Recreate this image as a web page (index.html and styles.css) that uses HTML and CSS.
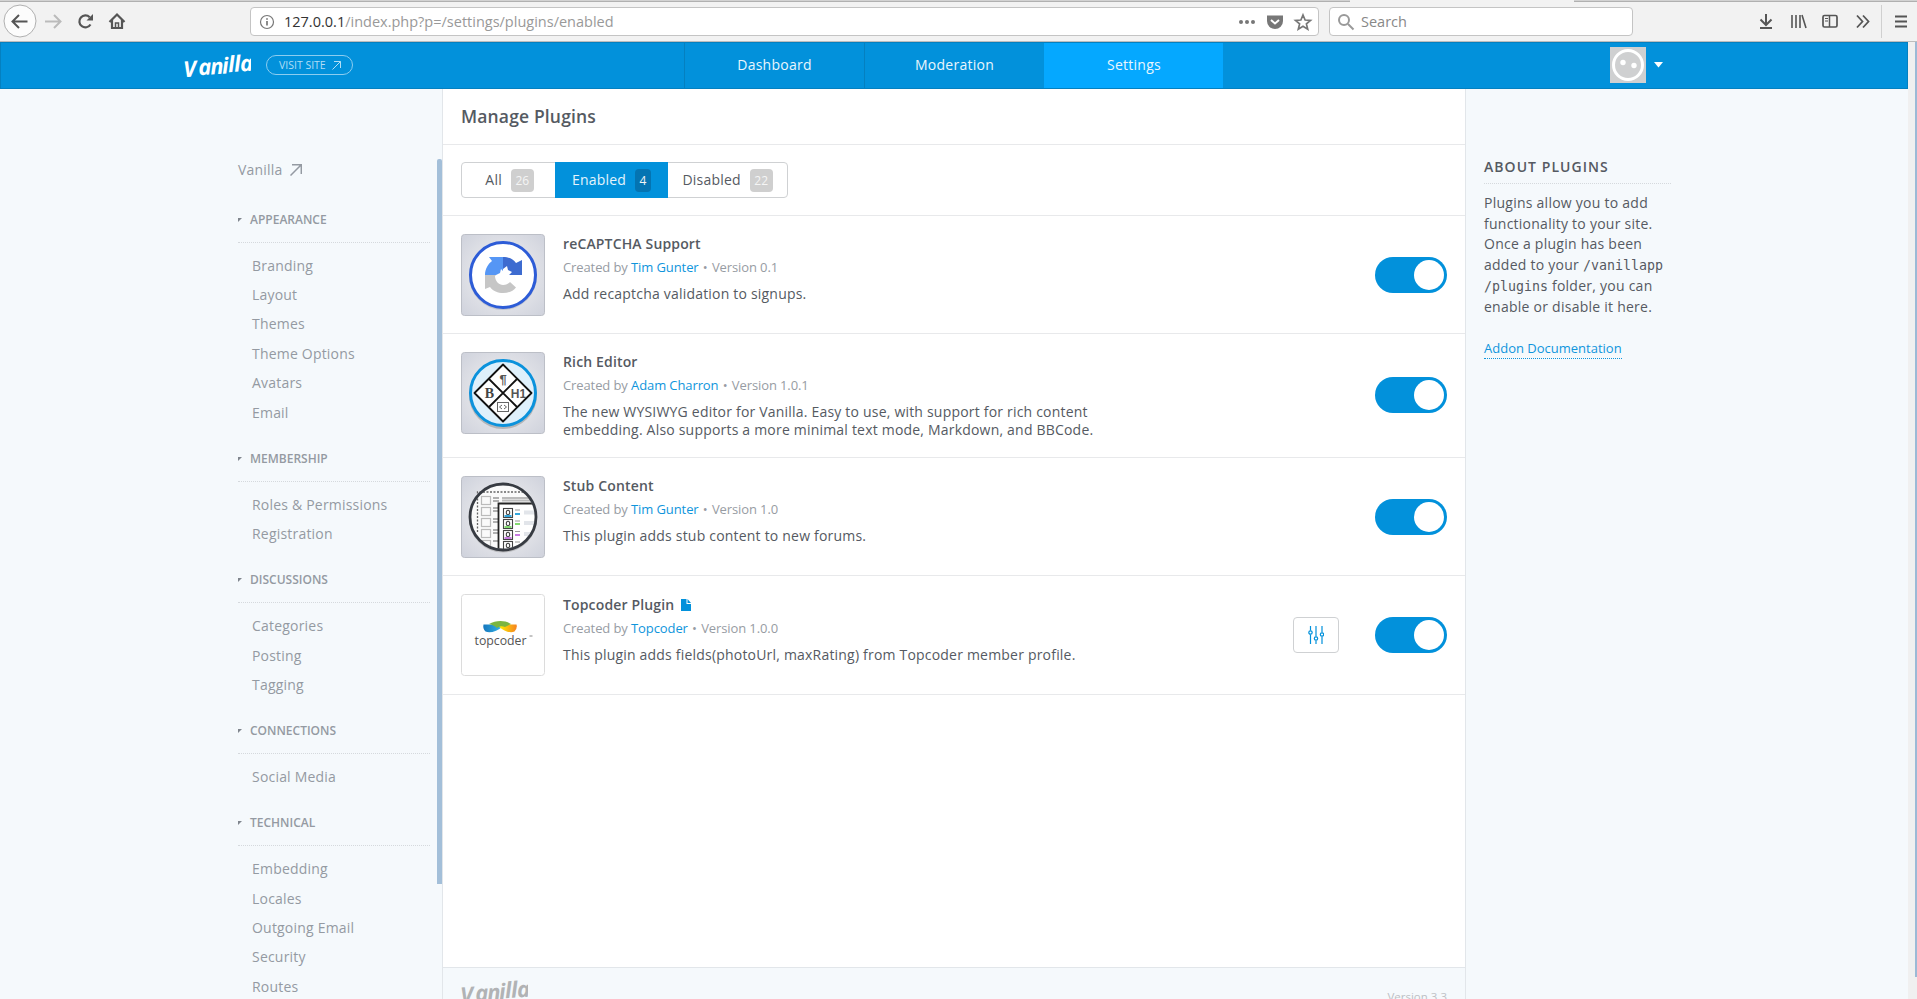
FILE: index.html
```html
<!DOCTYPE html>
<html lang="en">
<head>
<meta charset="utf-8">
<title>Manage Plugins</title>
<link rel="stylesheet" href="styles.css">
</head>
<body>
<div class="tabstrip"><span class="tab-left"></span><span class="tab-active"></span><span class="tab-right"></span></div>
<div class="toolbar">
  <svg class="nav-icons" width="140" height="39" viewBox="0 2 140 39" fill="none">
    <circle cx="20" cy="21" r="16" fill="#fcfcfc" stroke="#b0b0b0"/>
    <path d="M27.500 21.500H13M19 15l-6.500 6.500L19 28" stroke="#555" stroke-width="2"/>
    <path d="M45 21.500h15M54 15l6.500 6.500L54 28" stroke="#bbb" stroke-width="2"/>
    <path d="M90.500 24.500a6 6 0 1 1-.8-7.300" stroke="#555" stroke-width="2.200"/>
    <path d="M93 14v6.500h-6.500z" fill="#555"/>
    <path d="M109.500 22l7.500-7.500 7.500 7.500M112 20v8h10v-8" stroke="#555" stroke-width="2.200"/>
    <path d="M115.500 28v-5h3v5" stroke="#555" stroke-width="1.500"/>
  </svg>
  <div class="urlbar">
    <svg width="16" height="16" viewBox="0 0 16 16" fill="none" stroke="#777"><circle cx="8" cy="8" r="6.500" stroke-width="1.200"/><path d="M8 7v4.500M8 4.300v1.500" stroke-width="1.700"/></svg>
    <span class="url"><b>127.0.0.1</b>/index.php?p=/settings/plugins/enabled</span>
    <svg width="76" height="20" viewBox="0 0 76 20" fill="none">
      <g fill="#777"><circle cx="3" cy="10" r="2"/><circle cx="9" cy="10" r="2"/><circle cx="15" cy="10" r="2"/></g>
      <path d="M29 3.500h16v5.500a8 8 0 0 1-16 0z" fill="#777"/><path d="M33 8l4 3.500L41 8" stroke="#fff" stroke-width="2"/>
      <path d="M65 3l2.100 5 5.400.4-4.100 3.500 1.300 5.300-4.700-2.900-4.700 2.900 1.300-5.300-4.100-3.500 5.400-.4z" stroke="#777" stroke-width="1.700"/>
    </svg>
  </div>
  <div class="searchbar">
    <svg width="18" height="18" viewBox="0 0 18 18" fill="none" stroke="#999" stroke-width="2"><circle cx="7" cy="7" r="5"/><path d="M11 11l5.500 5.500"/></svg>
    <span>Search</span>
  </div>
  <svg class="tool-icons" width="160" height="39" viewBox="1757 2 160 39" fill="none" stroke="#555" stroke-width="2">
    <path d="M1766 14v11M1760.500 19.500l5.500 5.500 5.500-5.500M1760 28h12"/>
    <path d="M1792 15v13M1796 15v13M1800 15v13M1802 15l4 13" stroke-width="1.600"/>
    <rect x="1823" y="15.500" width="14" height="11.500" rx="1.500" stroke-width="1.700"/><path d="M1829.500 16v11" stroke-width="1.500"/><path d="M1825 18.500h3M1825 21h3" stroke-width="1"/>
    <path d="M1857 15.500l5.500 6-5.500 6M1863 15.500l5.500 6-5.500 6" stroke-width="1.800"/>
    <path d="M1881.500 5v33" stroke="#d0d0d0" stroke-width="1"/>
    <path d="M1895 16.500h12M1895 21.500h12M1895 26.500h12"/>
  </svg>
</div>
<div class="viewport">
<div class="page">
  <header class="header">
    <div class="brand">
      <svg class="logo" width="68" height="32" viewBox="0 0 68 32"><g transform="rotate(-4 34 16)"><text x="0 15 27 39 45 51 57" y="26 25 25 25 24 24 24" class="logo-text">Vanilla</text></g></svg>
      <a class="visit">VISIT SITE <svg width="9" height="9" viewBox="0 0 9 9" fill="none" stroke="currentColor"><path d="M.5 8.500l8-8M2 .5h6.500V7"/></svg></a>
    </div>
    <nav class="nav"><a>Dashboard</a><a>Moderation</a><a class="on">Settings</a></nav>
    <div class="me">
      <svg width="36" height="36" viewBox="0 0 36 36"><rect width="36" height="36" fill="#cfd0d1"/><circle cx="18" cy="18" r="14.500" fill="none" stroke="#fff" stroke-width="3"/><circle cx="13" cy="15.500" r="2.700" fill="#fff"/><circle cx="24" cy="18.500" r="2.700" fill="#fff"/></svg>
      <svg width="9" height="6" viewBox="0 0 9 6"><path d="M0 0h9L4.500 5.500z" fill="#fff"/></svg>
    </div>
  </header>
  <div class="body">
    <aside class="side">
      <div class="side-inner">
        <a class="side-home">Vanilla <svg width="12" height="12" viewBox="0 0 12 12" fill="none" stroke="currentColor" stroke-width="1.500"><path d="M.5 11.500l11-11M2 .7h9.300V10"/></svg></a>
        <section><h4>APPEARANCE</h4><a>Branding</a><a>Layout</a><a>Themes</a><a>Theme Options</a><a>Avatars</a><a>Email</a></section>
        <section><h4>MEMBERSHIP</h4><a>Roles &amp; Permissions</a><a>Registration</a></section>
        <section><h4>DISCUSSIONS</h4><a>Categories</a><a>Posting</a><a>Tagging</a></section>
        <section><h4>CONNECTIONS</h4><a>Social Media</a></section>
        <section><h4>TECHNICAL</h4><a>Embedding</a><a>Locales</a><a>Outgoing Email</a><a>Security</a><a>Routes</a></section>
      </div>
      <div class="side-thumb"></div>
    </aside>
    <main class="main">
      <h1>Manage Plugins</h1>
      <div class="filters">
        <div class="group"><a class="all">All <i>26</i></a><a class="on">Enabled <i>4</i></a><a class="dis">Disabled <i>22</i></a></div>
      </div>
      <article class="row r1">
        <svg class="pic" viewBox="0 0 84 82">
          <defs><radialGradient id="bg" r=".7"><stop offset="0" stop-color="#f4f4f5"/><stop offset=".5" stop-color="#e2e3e8"/><stop offset="1" stop-color="#cfd2dc"/></radialGradient></defs>
          <rect x=".5" y=".5" width="83" height="81" rx="3" fill="url(#bg)" stroke="#bcbfc7"/>
          <circle cx="42" cy="42" r="34" fill="#a9abb5" opacity=".5"/>
          <circle cx="42" cy="41" r="32.500" fill="#fff" stroke="#2d5cd7" stroke-width="3"/>
          <path d="M28 23h14v14l-2-2-1 4-4 2H24c0-6 3-11 7-14z" fill="#5596f5"/>
          <path d="M42 23c6 0 10 2 13 6l6-3v15H48l3-3-4-2-1-4-4 3z" fill="#3d6bd0"/>
          <path d="M24 41h11l-1 1c0 5 4 9 8 9 3 0 5-1 7-3l6 5.500c-3 4-8 5.500-13 5.500s-10-2-13-6l-5 2z" fill="#c6c6c6"/>
        </svg>
        <div class="info"><h3>reCAPTCHA Support</h3><p class="meta">Created by <a>Tim Gunter</a> <em>•</em> Version 0.1</p><p class="desc">Add recaptcha validation to signups.</p></div>
        <div class="actions"><span class="toggle"></span></div>
      </article>
      <article class="row r2">
        <svg class="pic" viewBox="0 0 84 82">
          <rect x=".5" y=".5" width="83" height="81" rx="3" fill="url(#bg)" stroke="#bcbfc7"/>
          <circle cx="42" cy="43" r="34" fill="#999" opacity=".6"/>
          <circle cx="42" cy="41" r="32.500" fill="#dff0fb" stroke="#0b92dc" stroke-width="3"/>
          <path d="M42 12.500L70.500 41 42 69.500 13.500 41zM28 27l28 28M56 27L28 55" fill="#fff" stroke="#111" stroke-width="1.800" stroke-linejoin="round"/>
          <text x="42" y="32" class="g-sans" font-size="13">¶</text><text x="28.500" y="46" class="g-serif">B</text><text x="57.500" y="45.500" class="g-sans" font-size="12">H1</text>
          <rect x="36.500" y="50.500" width="11" height="9" fill="none" stroke="#666"/><path d="M41 53l-2.500 2 2.500 2M43 53l2.500 2-2.500 2" fill="none" stroke="#666"/>
        </svg>
        <div class="info"><h3>Rich Editor</h3><p class="meta">Created by <a>Adam Charron</a> <em>•</em> Version 1.0.1</p><p class="desc">The new WYSIWYG editor for Vanilla. Easy to use, with support for rich content<br>embedding. Also supports a more minimal text mode, Markdown, and BBCode.</p></div>
        <div class="actions"><span class="toggle"></span></div>
      </article>
      <article class="row r3">
        <svg class="pic" viewBox="0 0 84 82">
          <defs><clipPath id="lens"><circle cx="42" cy="41" r="32"/></clipPath></defs>
          <rect x=".5" y=".5" width="83" height="81" rx="3" fill="url(#bg)" stroke="#bcbfc7"/>
          <circle cx="42" cy="42.500" r="34" fill="#999" opacity=".5"/>
          <circle cx="42" cy="41" r="33" fill="#fafafa"/>
          <g clip-path="url(#lens)" fill="none">
            <path d="M32 22h6M32 25h6M32 32h5M32 35h5M32 43h5M32 46h5M32 54h5M32 57h5M32 65h5" stroke="#666" stroke-width="1.200"/>
            <path d="M41 22h30M41 24.500h30" stroke="#bbb" stroke-width="1.800"/>
            <g stroke="#bbb" stroke-width="1.200"><rect x="20.500" y="20.500" width="9" height="8"/><rect x="20.500" y="31.500" width="9" height="8"/><rect x="20.500" y="42.500" width="9" height="8"/><rect x="20.500" y="53.500" width="9" height="8"/><rect x="20.500" y="64.500" width="9" height="8"/></g>
            <path d="M37.500 80V27.500h40V80z" fill="#fff" stroke="#222" stroke-width="1.800"/>
            <g stroke="#444" stroke-width="1.100"><rect x="42.500" y="32.500" width="9" height="9"/><rect x="42.500" y="43.500" width="9" height="9"/><rect x="42.500" y="54.500" width="9" height="9"/><rect x="42.500" y="65.500" width="9" height="9"/><ellipse cx="47" cy="36.500" rx="1.700" ry="2.200"/><ellipse cx="47" cy="47.500" rx="1.700" ry="2.200"/><ellipse cx="47" cy="58.500" rx="1.700" ry="2.200"/><ellipse cx="47" cy="69.500" rx="1.700" ry="2.200"/></g>
            <path d="M43.500 40h7M54 38h5" stroke="#35a7dd" stroke-width="1.800"/><path d="M43.500 51h7M54 48h5" stroke="#83d970" stroke-width="1.800"/><path d="M43.500 62h7M54 59h5" stroke="#c87be0" stroke-width="1.800"/>
            <path d="M54 34h5M54 45h5M54 55.500h5M54 66h5" stroke="#999"/>
            <path d="M63 36.500h12M63 47h12M63 58h12" stroke="#e2e5ea" stroke-width="4"/>
          </g>
          <path d="M16.500 56V16h48" fill="none" stroke="#666" stroke-dasharray="2 1.500" stroke-width="1.300"/>
          <circle cx="42" cy="41" r="33" fill="none" stroke="#373b42" stroke-width="2.800"/>
        </svg>
        <div class="info"><h3>Stub Content</h3><p class="meta">Created by <a>Tim Gunter</a> <em>•</em> Version 1.0</p><p class="desc">This plugin adds stub content to new forums.</p></div>
        <div class="actions"><span class="toggle"></span></div>
      </article>
      <article class="row r4">
        <svg class="pic" viewBox="0 0 84 82">
          <defs><linearGradient id="tb"><stop offset="0" stop-color="#1677bd"/><stop offset="1" stop-color="#35b6e8"/></linearGradient><linearGradient id="ty"><stop offset="0" stop-color="#fff200"/><stop offset="1" stop-color="#f58220"/></linearGradient></defs>
          <rect x=".5" y=".5" width="83" height="81" rx="3" fill="#fff" stroke="#dcdcdc"/>
          <path d="M22.500 30.500h10l9 2c-5 5-13 7-17 5q-3-3-2-7z" fill="url(#tb)"/>
          <path d="M55.500 30.500h-8l-10 2c6 5 12 7 16 5q3-3 2-7z" fill="url(#ty)"/>
          <path d="M28 30c7-4 16-4 22 0l-6 3c-3-1-5-1-8 1-2-2-4-3-8-4z" fill="#7ab540"/>
          <text x="13.500" y="51" class="tc" textLength="52" lengthAdjust="spacingAndGlyphs">topcoder</text><path d="M68.500 42h3" stroke="#888"/>
        </svg>
        <div class="info"><h3>Topcoder Plugin <svg width="10" height="12" viewBox="0 0 10 12"><path d="M0 0h5.500v5H10v7H0zM6.500 0L10 4H6.500z" fill="#0291db"/></svg></h3><p class="meta">Created by <a>Topcoder</a> <em>•</em> Version 1.0.0</p><p class="desc">This plugin adds fields(photoUrl, maxRating) from Topcoder member profile.</p></div>
        <div class="actions"><span class="config"><svg width="16" height="18" viewBox="0 0 16 18" fill="none" stroke="#0291db" stroke-width="1.200"><path d="M2.500 0v4.500M2.500 8.500V18M8 0v10.500M8 14.500V18M14 0v6.500M14 10.500V18"/><circle cx="2.500" cy="6.500" r="1.700"/><circle cx="8" cy="12.500" r="1.700"/><circle cx="14" cy="8.500" r="1.700"/></svg></span><span class="toggle"></span></div>
      </article>
      <footer class="footer"><svg class="logo gray" width="68" height="32" viewBox="0 0 68 32"><g transform="rotate(-4 34 16)"><text x="0 15 27 39 45 51 57" y="26 25 25 25 24 24 24" class="logo-text">Vanilla</text></g></svg><span class="version">Version 3.3</span></footer>
    </main>
    <aside class="help">
      <h2>ABOUT PLUGINS</h2>
      <p>Plugins allow you to add<br>functionality to your site.<br>Once a plugin has been<br>added to your <code>/vanillapp</code><br><code>/plugins</code> folder, you can<br>enable or disable it here.</p>
      <a>Addon Documentation</a>
    </aside>
  </div>
</div>
<div class="scroll"><span></span></div>
</div>
</body>
</html>
```
FILE: styles.css
```css
* { box-sizing: border-box; }
body { margin: 0; width: 1917px; height: 999px; overflow: hidden; background: #f2f2f2; font: 14px/20px "Open Sans", "Noto Sans", sans-serif; color: #555a62; display: flex; flex-direction: column; }
svg { flex: none; }
h1, h2, h3, h4, p { margin: 0; font-weight: 600; }
i, em { font-style: normal; }

.tabstrip { display: flex; height: 2px; flex: none; }
.tab-left { width: 1350px; background: #d2d2d2; border-bottom: 1px solid #b0b0b0; }
.tab-active { width: 224px; background: #f2f2f2; }
.tab-right { flex: 1; background: #d2d2d2; border-bottom: 1px solid #b0b0b0; }

.toolbar { display: flex; align-items: center; height: 40px; flex: none; border-bottom: 1px solid #bdbdbd; background: #f2f2f2; }
.urlbar, .searchbar { display: flex; align-items: center; height: 29px; border: 1px solid #c4c4c4; border-radius: 4px; background: #fff; font-size: 14.500px; color: #999; }
.urlbar { width: 1069px; margin-left: 110px; padding: 0 4px 0 8px; }
.url { flex: 1; margin-left: 9px; letter-spacing: 0; }
.url b { color: #333; font-weight: 400; }
.searchbar { width: 304px; margin-left: 10px; padding-left: 7px; gap: 6px; color: #888; }
.tool-icons { margin-left: auto; }

.viewport { display: flex; flex: 1; min-height: 0; }
.page { width: 1908px; display: flex; flex-direction: column; background: #f5f9fc; }
.scroll { width: 9px; background: #f0f0f0; padding-left: 7px; }
.scroll span { display: block; width: 2px; height: 935px; background: #9cbad6; }

.header { height: 47px; flex: none; display: flex; background: #0291db; border: 1px solid #0480c0; color: #fff; }
.brand { width: 683px; padding: 0 0 1px 182px; display: flex; align-items: center; }
.logo-text { font: italic 700 22px "Open Sans", sans-serif; fill: #fff; }
.gray .logo-text { fill: #b1b3b5; }
.visit { display: flex; align-items: center; gap: 6px; margin-left: 15px; width: 87px; height: 20px; border: 1px solid #8ccdf0; border-radius: 10px; padding-left: 12px; font-size: 10.500px; color: #b3def5; white-space: nowrap; }
.nav { display: flex; }
.nav a { width: 180px; border-left: 1px solid #0480c0; line-height: 44px; text-align: center; color: #e9f6fd; letter-spacing: .25px; }
.nav .on { width: 179px; background: #05a8ff; border-color: #05a8ff; }
.me { margin-left: 387px; padding-bottom: 1px; display: flex; align-items: center; gap: 8px; }

.body { display: flex; flex: 1; min-height: 0; }
.side { width: 442px; display: flex; justify-content: space-between; color: #949aa2; }
.side-inner { margin-left: 238px; width: 192px; padding-top: 71px; }
.side-home { display: flex; align-items: center; gap: 7px; height: 20px; margin-bottom: 17.500px; letter-spacing: .2px; }
.side section { padding-bottom: 9.700px; }
.side h4 { display: flex; align-items: center; height: 45px; border-bottom: 1px dotted #d5d9dd; font-size: 12px; font-weight: 600; }
.side h4::before { content: ""; border-top: 4px solid #80868e; border-right: 4px solid transparent; margin-right: 8px; }
.side section a { display: block; line-height: 29.400px; padding-left: 14px; letter-spacing: .2px; }
.side section h4 + a { margin-top: 8px; }
.side-thumb { width: 5px; height: 725px; margin-top: 70px; background: #a3bfd9; border-radius: 2px 2px 0 0; }

.main { width: 1024px; border: 1px solid #e2e6ea; border-width: 0 1px; background: #fff; display: flex; flex-direction: column; }
.main h1 { height: 56px; flex: none; padding-left: 18px; border-bottom: 1px solid #e8e9eb; font-size: 17.500px; line-height: 55px; letter-spacing: .15px; }
.filters { height: 71px; flex: none; padding: 17px 18px; border-bottom: 1px solid #e8e9eb; }
.group { display: flex; width: 327px; height: 36px; border: 1px solid #cfd1d3; border-radius: 4px; }
.group a { display: flex; align-items: center; justify-content: center; gap: 9px; letter-spacing: .2px; }
.group i { background: #cfcfcf; color: #f5f5f5; border-radius: 4px; height: 23px; line-height: 23px; padding: 0 4.500px; font-size: 12px; letter-spacing: 0; }
.group .all { width: 93px; padding-left: 2px; }
.group .on { width: 113px; margin: -1px 0; background: #0291db; color: #e5f4fc; }
.group .on i { background: #0474b2; }
.group .dis { flex: 1; }

.row { display: flex; flex: none; border-bottom: 1px solid #e8e9eb; padding: 18px 18px 0; }
.r1, .r3 { height: 118px; }
.r2 { height: 124px; }
.r4 { height: 119px; }
.pic { width: 84px; height: 82px; }
.g-sans { font-family: "Liberation Sans", sans-serif; font-weight: 700; fill: #555; text-anchor: middle; }
.g-serif { font: 700 14px "Liberation Serif", serif; fill: #444; text-anchor: middle; }
.tc { font: 13px "Open Sans", sans-serif; fill: #555; }
.info { margin-left: 18px; flex: 1; }
.info h3 { font-size: 14px; line-height: 19px; letter-spacing: .15px; }
.info h3 svg { margin-left: 3px; vertical-align: -1px; }
.meta { font-size: 13px; font-weight: 400; line-height: 20px; margin-top: 4px; color: #979ca3; letter-spacing: -.1px; }
.meta em { margin: 0 1px; }
.meta a, .help a { color: #0f95dc; }
.desc { font-weight: 400; line-height: 18.700px; margin-top: 7.500px; letter-spacing: .2px; }
.r4 .info { padding-top: 1px; }
.actions { display: flex; align-items: center; align-self: flex-start; height: 82px; gap: 36px; }
.r2 .actions { height: 86px; }
.toggle { width: 72px; height: 36px; border-radius: 18px; background: #0291db; padding: 3px; display: flex; justify-content: flex-end; }
.toggle::after { content: ""; width: 30px; height: 30px; border-radius: 50%; background: #fff; }
.config { width: 46px; height: 36px; border: 1px solid #cfd1d3; border-radius: 4px; display: flex; align-items: center; justify-content: center; }
.footer { margin-top: auto; height: 32px; flex: none; border-top: 1px solid #e2e6ea; background: #f5f9fc; display: flex; justify-content: space-between; align-items: flex-start; padding: 7px 18px 0 17px; overflow: hidden; }
.version { font-size: 11.500px; color: #bcc0c4; line-height: 18px; margin-top: 13px; }

.help { margin-left: 18px; width: 187px; padding-top: 67px; }
.help h2 { font-size: 14px; line-height: 22px; height: 28px; letter-spacing: 1.050px; border-bottom: 1px dotted #d5d9dd; }
.help p { font-weight: 400; line-height: 20.700px; margin: 9px 0 21px; letter-spacing: .25px; white-space: nowrap; }
.help code { font: 13.300px "DejaVu Sans Mono", monospace; letter-spacing: 0; }
.help a { display: inline-block; font-size: 13px; line-height: 19px; border-bottom: 1px dotted #0f95dc; }
```
